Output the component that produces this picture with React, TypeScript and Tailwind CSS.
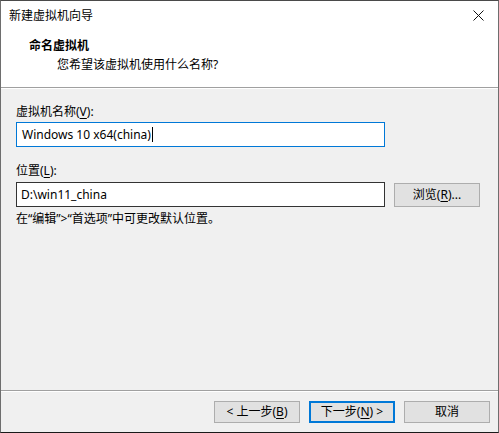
const font = { fontFamily: '"Noto Sans", "Noto Sans CJK SC", sans-serif' };

function U({ children }: { children: string }) {
  return <span className="underline underline-offset-2">{children}</span>;
}

function Btn({ children, primary }: { children: React.ReactNode; primary?: boolean }) {
  return (
    <button
      type="button"
      className={
        primary
          ? 'h-[22px] w-[86px] border-2 border-[#0078d7] bg-[#e1e1e1] text-[12px] leading-none text-black flex items-center justify-center'
          : 'h-[22px] w-[86px] border border-[#adadad] bg-[#e1e1e1] text-[12px] leading-none text-black flex items-center justify-center'
      }
    >
      {children}
    </button>
  );
}

export default function App() {
  return (
    <div className="w-[499px] h-[433px] bg-[#f0f0f0] text-black border border-t-[#4a4a4a] border-x-[#6e6e6e] border-b-[#1a1a1a] flex flex-col overflow-hidden" style={font}>
      <div className="h-[29px] bg-white flex items-center justify-between pl-[8px] pr-[14px] shrink-0">
        <div className="text-[12px] leading-none pt-[1px]">新建虚拟机向导</div>
        <svg width="11" height="11" viewBox="0 0 11 11">
          <path d="M0.5 0.5 L10.5 10.5 M10.5 0.5 L0.5 10.5" stroke="#111" strokeWidth="1" />
        </svg>
      </div>

      <div className="h-[57px] bg-white shrink-0 pt-[8px]">
        <div className="pl-[28px] text-[12px] font-bold leading-[16px]">命名虚拟机</div>
        <div className="pl-[56px] text-[12px] leading-[16px] pt-[3px]">您希望该虚拟机使用什么名称?</div>
      </div>
      <div className="h-px bg-[#a0a0a0] shrink-0" />
      <div className="h-px bg-white shrink-0" />

      <div className="flex-1 px-[15px] pt-[15px]">
        <div className="text-[12px] leading-[16px]">
          虚拟机名称(<U>V</U>):
        </div>
        <div className="mt-[2px] h-[25px] w-[369px] border border-[#0078d7] bg-white flex items-center pl-[5px] text-[12px]">
          Windows 10 x64(china)<span className="inline-block w-px h-[15px] bg-black ml-[1px]" />
        </div>

        <div className="mt-[16px] text-[12px] leading-[16px]">
          位置(<U>L</U>):
        </div>
        <div className="mt-[3px] flex items-center gap-[9px]">
          <div className="h-[25px] w-[369px] border border-[#333] bg-white flex items-center pl-[4px] text-[12px]">
            D:\win11_china
          </div>
          <div className="mt-[1px] h-[24px] w-[86px] border border-[#adadad] bg-[#e1e1e1] flex items-center justify-center text-[12px]">
            浏览(<U>R</U>)...
          </div>
        </div>
        <div className="mt-[4px] text-[12px] leading-[16px]">在“编辑”&gt;“首选项”中可更改默认位置。</div>
      </div>

      <div className="h-px bg-[#a0a0a0] shrink-0" />
      <div className="h-px bg-white shrink-0" />
      <div className="h-[40px] shrink-0 flex items-start justify-end gap-[9px] pr-[8px] pt-[9px]">
        <Btn>
          &lt; 上一步(<U>B</U>)
        </Btn>
        <Btn primary>
          下一步(<U>N</U>) &gt;
        </Btn>
        <Btn>取消</Btn>
      </div>
    </div>
  );
}
